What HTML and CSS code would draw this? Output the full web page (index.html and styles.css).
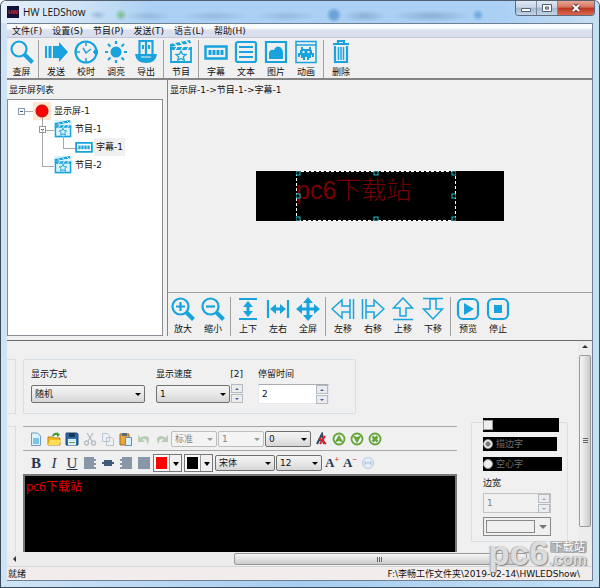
FILE: index.html
```html
<!DOCTYPE html>
<html lang="zh-CN">
<head>
    <meta charset="UTF-8">
    <meta name="viewport" content="width=device-width, initial-scale=1.0">
    <title>HW LEDShow</title>
    <link rel="stylesheet" href="styles.css">
</head>
<body>
    <svg class="sprite" aria-hidden="true">
        <symbol id="clap" viewBox="0 0 24 24">
            <path d="M2 9h20v13H2z" fill="none" stroke="currentColor" stroke-width="1.8"/>
            <path d="M1 4 21 0l1 3L1 7z" fill="currentColor"/>
            <path d="M1 7h22v3H1z" fill="currentColor"/>
            <path d="M5 3l3 3M11 2l3 3M17 1l3 3M6 10l2-3M12 10l2-3M18 10l2-3" stroke="#fff" stroke-width="1.3"/>
            <path d="M12 11l1.500 3.200 3.500.300-2.600 2.300.800 3.400-3.200-1.800-3.200 1.800.800-3.400L7 14.500l3.500-.300z" fill="none" stroke="currentColor" stroke-width="1.3"/>
        </symbol>
        <symbol id="caption" viewBox="0 0 24 24">
            <path d="M1.500 6.500h21v12h-21z" fill="none" stroke="currentColor" stroke-width="2.5"/>
            <path d="M4.500 10h3v5h-3zM8.500 10h3v5h-3zM12.500 10h3v5h-3zM16.500 10h3v5h-3z" fill="currentColor"/>
        </symbol>
    </svg>

    <div class="window">
        <header class="titlebar">
            <span class="app-icon">HW</span>
            <h1>HW LEDShow</h1>
            <div class="window-buttons">
                <button class="min" aria-label="最小化"><svg viewBox="0 0 12 10"><path d="M1.500 5.500h9v3h-9z" fill="#fff" stroke="#566276"/></svg></button>
                <button class="max" aria-label="最大化"><svg viewBox="0 0 12 10"><path d="M1.500 1.500h9v7h-9z" fill="#fff" stroke="#566276"/><path d="M4.500 4h3v2h-3z" fill="#a9bbce" stroke="#566276"/></svg></button>
                <button class="close" aria-label="关闭"><svg viewBox="0 0 12 10"><path d="M3 2l6 6M9 2L3 8" stroke="#5b3038" stroke-width="4"/><path d="M3 2l6 6M9 2L3 8" stroke="#fff" stroke-width="2.3"/></svg></button>
            </div>
        </header>

        <div class="client">
            <nav class="menu">
                <a href="#">文件(F)</a>
                <a href="#">设置(S)</a>
                <a href="#">节目(P)</a>
                <a href="#">发送(T)</a>
                <a href="#">语言(L)</a>
                <a href="#">帮助(H)</a>
            </nav>

            <div class="toolbar main-tools">
                <button><svg viewBox="0 0 24 24"><circle cx="9" cy="9" r="7.500" class="line"/><path d="M14.500 14.500l8 8" class="line thick"/></svg>查屏</button>
                <span class="sep"></span>
                <button><svg viewBox="0 0 24 24"><path d="M1 6h2v12H1zM4.500 6h3v12h-3zM9 6h6V2l9 10-9 10v-4H9z" class="fill"/></svg>发送</button>
                <button><svg viewBox="0 0 24 24"><circle cx="12" cy="12" r="10.500" class="line"/><path d="M9 8l3 5 5-4M12 2v4M12 18v4M2 12h4M19 12h5" class="line thin"/><path d="M20 10h4v4h-4z" class="fill"/></svg>校时</button>
                <button><svg viewBox="0 0 24 24"><circle cx="12" cy="12" r="5.500" class="fill"/><path d="M12 1v3M12 20v3M1 12h3M20 12h3M4 4l2.500 2.500M17.500 17.500L20 20M20 4l-2.500 2.500M6.500 17.500L4 20" class="line"/></svg>调亮</button>
                <button><svg viewBox="0 0 24 24"><path d="M5.500 1h13v14h-13zM12 1v14" class="line"/><path d="M8 5h2v4H8zM14 5h2v4h-2zM1 14h22q-1 9-11 9T1 14z" class="fill"/><path d="M7 17h10" stroke="#f0f0f0"/></svg>导出</button>
                <span class="sep"></span>
                <button><svg><use href="#clap"/></svg>节目</button>
                <span class="sep"></span>
                <button><svg><use href="#caption"/></svg>字幕</button>
                <button><svg viewBox="0 0 24 24"><rect x="2" y="2" width="20" height="20" rx="2" class="line"/><path d="M5 7h14M5 12h14M5 17h14" class="line"/></svg>文本</button>
                <button><svg viewBox="0 0 24 24"><path d="M2 2h20v20H2z" class="line"/><path d="M5 19v-6q1-4 5-3 2-5 6-3 3 2 3 6v6z" class="fill"/></svg>图片</button>
                <button><svg viewBox="0 0 24 24"><path d="M2 1.500h20v21H2zM2 5h20" class="line thin"/><path d="M7 7h2v2h6V7h2v3h1v3h2v4h-2v-2h-1v3h-2v2h-2v-3h-2v3H9v-2H7v-3H6v2H4v-4h2v-3h1z" class="fill"/><path d="M8.500 11h2v2h-2zM13.500 11h2v2h-2z" fill="#f0f0f0"/></svg>动画</button>
                <span class="sep"></span>
                <button><svg viewBox="0 0 24 24"><path d="M4 4h16M9 3V1h6v2M6 6v16h12V6" class="line"/><path d="M9.500 7v13M12 7v13M14.500 7v13" class="line thin"/></svg>删除</button>
            </div>

            <div class="workspace">
                <section class="screens">
                    <h2>显示屏列表</h2>
                    <ul class="tree">
                        <li>
                            <div class="node"><i class="toggle"></i><span class="dot"></span><span>显示屏-1</span></div>
                            <ul>
                                <li>
                                    <div class="node"><i class="toggle"></i><svg><use href="#clap"/></svg><span>节目-1</span></div>
                                    <ul>
                                        <li><div class="node"><svg class="plain"><use href="#caption"/></svg><span class="selected">字幕-1</span></div></li>
                                    </ul>
                                </li>
                                <li><div class="node"><svg><use href="#clap"/></svg><span>节目-2</span></div></li>
                            </ul>
                        </li>
                    </ul>
                </section>

                <section class="preview">
                    <p class="path">显示屏-1-&gt;节目-1-&gt;字幕-1</p>
                    <div class="stage">
                        <div class="led">
                            <div class="region">
                                pc6下载站
                                <svg class="handles" aria-hidden="true">
                                    <rect x="0" y="0" width="100%" height="100%" class="marquee"/>
                                    <svg x="0" y="0" class="grips"><rect x="0" y="0"/></svg>
                                    <svg x="50%" y="0" class="grips"><rect x="-2" y="0"/></svg>
                                    <svg x="100%" y="0" class="grips"><rect x="-4" y="0"/></svg>
                                    <svg x="0" y="50%" class="grips"><rect x="0" y="-2"/></svg>
                                    <svg x="100%" y="50%" class="grips"><rect x="-4" y="-2"/></svg>
                                    <svg x="0" y="100%" class="grips"><rect x="0" y="-4"/></svg>
                                    <svg x="50%" y="100%" class="grips"><rect x="-2" y="-4"/></svg>
                                    <svg x="100%" y="100%" class="grips"><rect x="-4" y="-4"/></svg>
                                </svg>
                            </div>
                        </div>
                    </div>
                    <div class="toolbar view-tools">
                        <button><svg viewBox="0 0 24 24"><circle cx="9.500" cy="9.500" r="8" class="line"/><path d="M5 9.500h9M9.500 5v9" class="line"/><path d="M15.500 15.500l7 7" class="line thick"/></svg>放大</button>
                        <button><svg viewBox="0 0 24 24"><circle cx="9.500" cy="9.500" r="8" class="line"/><path d="M5 9.500h9" class="line"/><path d="M15.500 15.500l7 7" class="line thick"/></svg>缩小</button>
                        <span class="sep"></span>
                        <button><svg viewBox="0 0 24 24"><path d="M3 2h18M3 22h18" class="line"/><path d="M12 4l5 6h-3.500v4H17l-5 6-5-6h3.500v-4H7z" class="fill"/></svg>上下</button>
                        <button><svg viewBox="0 0 24 24"><path d="M2 3v18M22 3v18" class="line"/><path d="M4 12l6-5v3.500h4V7l6 5-6 5v-3.500h-4V17z" class="fill"/></svg>左右</button>
                        <button><svg viewBox="0 0 24 24"><path d="M12 0l5 6h-3.500v4.500H18V7l6 5-6 5v-3.500h-4.500V18H17l-5 6-5-6h3.500v-4.500H6V17l-6-5 6-5v3.500h4.500V6H7z" class="fill"/></svg>全屏</button>
                        <span class="sep"></span>
                        <button><svg viewBox="0 0 24 24"><path d="M1 12L11 3v6h8v6h-8v6zM19 2v20M22.500 2v20" class="line thin"/></svg>左移</button>
                        <button><svg viewBox="0 0 24 24"><path d="M23 12L13 3v6H5v6h8v6zM5 2v20M1.500 2v20" class="line thin"/></svg>右移</button>
                        <button><svg viewBox="0 0 24 24"><path d="M12 1l9.500 10H15v8H9v-8H2.500zM2 22.500h20" class="line thin"/></svg>上移</button>
                        <button><svg viewBox="0 0 24 24"><path d="M12 22l9.500-10H15V2H9v10H2.500zM2 1.500h20" class="line thin"/></svg>下移</button>
                        <span class="sep"></span>
                        <button><svg viewBox="0 0 24 24"><rect x="2" y="2" width="20" height="20" rx="5" class="line"/><path d="M8 6l10 6-10 6z" class="fill"/></svg>预览</button>
                        <button><svg viewBox="0 0 24 24"><rect x="2" y="2" width="20" height="20" rx="5" class="line"/><path d="M8 8h8v8H8z" class="fill"/></svg>停止</button>
                    </div>
                </section>
            </div>

            <div class="properties">
                <div class="props-body">
                    <div class="edge"><div></div><div></div></div>

                    <div class="props-main">
                        <div class="group effects">
                            <div class="field mode">
                                <label for="mode">显示方式</label>
                                <span class="drop"><select id="mode"><option>随机</option></select></span>
                            </div>
                            <div class="field speed">
                                <div class="label-row"><label for="speed">显示速度</label><span>[2]</span></div>
                                <div class="with-spin">
                                    <span class="drop"><select id="speed"><option>1</option></select></span>
                                    <span class="spin"><button aria-label="增加"></button><button aria-label="减少"></button></span>
                                </div>
                            </div>
                            <div class="field stay">
                                <label for="stay">停留时间</label>
                                <div class="number"><input type="text" id="stay" value="2"><span class="spin"><button aria-label="增加"></button><button aria-label="减少"></button></span></div>
                            </div>
                        </div>

                        <div class="editor">
                            <div class="edit-tools">
                                <button aria-label="新建"><svg viewBox="0 0 14 14"><path d="M2.500 1h6l3 3v9.500h-9z" fill="#dff3fc" stroke="#6e9dbd"/><path d="M4 6h6v6H4z" fill="#7cc5e6"/></svg></button>
                                <button aria-label="打开"><svg viewBox="0 0 14 14"><path d="M1 5h5l1 1h6v7H1z" fill="#f3bd1d" stroke="#b98a16"/><path d="M1 13l2-5h11l-2 5z" fill="#ffdd55"/><path d="M6 4q1-3 5-2" fill="none" stroke="#3e9a35" stroke-width="2"/><path d="M10 0l3 3-3 2z" fill="#3e9a35"/></svg></button>
                                <button aria-label="保存"><svg viewBox="0 0 14 14"><path d="M1 1h11l1 1v11H1z" fill="#2d6aa8" stroke="#1e4777"/><path d="M4 1h6v4H4z" fill="#17345c"/><path d="M3 7h8v6H3z" fill="#d9ebf5"/><path d="M4 10h6v1H4z" fill="#63b04c"/></svg></button>
                                <button disabled aria-label="剪切"><svg viewBox="0 0 14 14"><g fill="none" stroke="#b5bdc4" stroke-width="1.3"><path d="M4 1l5 8M10 1L5 9"/><circle cx="3.500" cy="11" r="2"/><circle cx="10.500" cy="11" r="2"/></g></svg></button>
                                <button disabled aria-label="复制"><svg viewBox="0 0 14 14"><path d="M1.500 1.500h5l2 2v6h-7zM5.500 5.500h5l2 2v6h-7z" fill="#edf0f4" stroke="#bcc4cf"/></svg></button>
                                <button aria-label="粘贴"><svg viewBox="0 0 14 14"><path d="M1 2h9v11H1z" fill="#e8a63c" stroke="#9b6c2c"/><path d="M3 1h5v3H3z" fill="#5d6974"/><path d="M6.500 5.500h6v8h-6z" fill="#d9f0fb" stroke="#5c8fb5"/></svg></button>
                                <button disabled aria-label="撤销"><svg viewBox="0 0 14 14"><path d="M1 3v7h7L5.500 7.500q4-2 5 5 4-8-2.500-8.500-2 0-4.500 1.500z" fill="#b7cdb4"/></svg></button>
                                <button disabled aria-label="重做"><svg viewBox="0 0 14 14"><path d="M13 3v7H6l2.500-2.500q-4-2-5 5Q-.5 4.500 6 4q2 0 4.500 1.500z" fill="#b7cdb4"/></svg></button>
                                <span class="drop small off"><select aria-label="字间距" disabled><option>标准</option></select></span>
                                <span class="drop small off"><select aria-label="行间距" disabled><option>1</option></select></span>
                                <span class="drop small"><select aria-label="偏移"><option>0</option></select></span>
                                <button aria-label="清除格式"><svg viewBox="0 0 14 14"><path d="M3 12L8 2l2 10M5 8h5" fill="none" stroke="#2f4765" stroke-width="2"/><path d="M5 6l7 6M11 4l-5 8" stroke="#e0202e" stroke-width="2"/></svg></button>
                                <button aria-label="上移"><svg viewBox="0 0 14 14" class="round"><circle cx="7" cy="7" r="5.500"/><path d="M4.500 9L7 4.500 9.500 9 7 8z"/></svg></button>
                                <button aria-label="下移"><svg viewBox="0 0 14 14" class="round"><circle cx="7" cy="7" r="5.500"/><path d="M4.500 5L7 9.500 9.500 5 7 6z"/></svg></button>
                                <button aria-label="取消"><svg viewBox="0 0 14 14" class="round"><circle cx="7" cy="7" r="5.500"/><path d="M4.500 4.500l5 5M9.500 4.500l-5 5" stroke-width="2.5"/></svg></button>
                            </div>
                            <div class="edit-tools">
                                <button class="letter"><b>B</b></button>
                                <button class="letter"><i>I</i></button>
                                <button class="letter"><u>U</u></button>
                                <button aria-label="左对齐"><svg viewBox="0 0 14 14"><path d="M1 2h10M1 4h12M1 6h10M1 8h12M1 10h10M1 12h12" class="bars"/></svg></button>
                                <button aria-label="居中"><svg viewBox="0 0 14 14"><path d="M1 7h12M3 5h8M3 9h8" stroke="#405a79" stroke-width="2"/></svg></button>
                                <button aria-label="右对齐"><svg viewBox="0 0 14 14"><path d="M3 2h10M1 4h12M3 6h10M1 8h12M3 10h10M1 12h12" class="bars"/></svg></button>
                                <button aria-label="两端对齐"><svg viewBox="0 0 14 14"><path d="M1 2h12M1 4h12M1 6h12M1 8h12M1 10h12M1 12h12" class="bars"/></svg></button>
                                <button class="color red" aria-label="文字颜色"><span></span></button>
                                <button class="color black" aria-label="背景颜色"><span></span></button>
                                <span class="drop small font"><select aria-label="字体"><option>宋体</option></select></span>
                                <span class="drop small"><select aria-label="字号"><option>12</option></select></span>
                                <button class="letter size">A<sup>+</sup></button>
                                <button class="letter size">A<sup>−</sup></button>
                                <button aria-label="链接"><svg viewBox="0 0 14 14"><circle cx="7" cy="7" r="5.500" fill="#e3edf7" stroke="#b6c9df"/><path d="M4 5v4M10 5v4M4 7h6" fill="none" stroke="#a9bfd9"/></svg></button>
                            </div>
                            <textarea aria-label="字幕内容">pc6下载站</textarea>
                        </div>
                    </div>

                    <div class="group outline">
                        <label class="choice wide"><input type="checkbox" aria-label="启用描边"></label>
                        <label class="choice"><input type="radio" name="style" checked disabled>描边字</label>
                        <label class="choice wider"><input type="radio" name="style" disabled>空心字</label>
                        <label for="border">边宽</label>
                        <div class="number off"><input type="text" id="border" value="1" disabled><span class="spin"><button disabled aria-label="增加"></button><button disabled aria-label="减少"></button></span></div>
                        <button class="picker" disabled aria-label="边框颜色"><span></span></button>
                    </div>
                </div>
                <div class="scroll-y"><i class="arrow up"></i><div class="thumb"><i></i></div></div>
                <div class="scroll-x"><i class="arrow left"></i><div class="thumb"><i></i></div></div>
            </div>

            <footer class="status">
                <span>就绪</span>
                <span>F:\李畅工作文件夹\2019-02-14\HWLEDShow\</span>
            </footer>
        </div>

        <div class="watermark">
            <strong>pc6</strong>
            <div><span>下载站</span><em>.com</em></div>
        </div>
    </div>
</body>
</html>
```
FILE: styles.css
```css
* {
    box-sizing: border-box;
}
body {
    margin: 0;
    font: 9px/12px "DejaVu Sans", "Noto Sans CJK SC", sans-serif;
    color: #111;
}
button, input, select, textarea {
    font: inherit;
    color: inherit;
    margin: 0;
    padding: 0;
    border: 0;
    border-radius: 0;
    background: none;
    appearance: none;
}
h1, h2, p, ul {
    margin: 0;
    padding: 0;
    font-weight: normal;
}
.sprite {
    display: none;
}

/* window frame */
.window {
    position: relative;
    display: flex;
    flex-direction: column;
    height: 100vh;
    min-height: 500px;
    padding: 0 6px 6px;
    border: 1px solid #39495a;
    border-top-color: #52606e;
    border-radius: 6px 6px 0 0;
    background: linear-gradient(90deg, #cfe3f6, #a8cdf0 50%, #c3e0f5);
    overflow: hidden;
}
.titlebar {
    display: flex;
    align-items: center;
    flex: none;
    height: 22px;
    margin: 0 -6px;
    padding-left: 6px;
    background:
        radial-gradient(circle at 120px 14px, #7fbf9a 1px, transparent 6px),
        radial-gradient(ellipse 9px 5px at 97px 14px, #9dbcd9, transparent),
        radial-gradient(ellipse 24px 5px at 148px 15px, #96b9db, transparent),
        radial-gradient(ellipse 34px 5px at 213px 15px, #96b9db, transparent),
        radial-gradient(ellipse 32px 5px at 285px 15px, #96b9db, transparent),
        radial-gradient(ellipse 8px 8px at 333px 14px, #6ba3da 40%, transparent),
        radial-gradient(ellipse 22px 6px at 364px 15px, #8aafd3, transparent),
        radial-gradient(ellipse 40px 6px at 430px 15px, #8aafd3, transparent),
        radial-gradient(circle at 477px 14px, #6ca8e2 1px, transparent 6px),
        linear-gradient(90deg, #e6f0fa, #cfe3f6 80px, #abd0f4 150px, #abd0f4 500px, #c6def2);
}
.app-icon {
    width: 12px;
    height: 12px;
    margin-right: 4px;
    background: #15103a;
    color: #e32323;
    font: bold 6px/12px "Liberation Sans", sans-serif;
    text-align: center;
}
h1 {
    font: 10px/14px "Open Sans", sans-serif;
}
.window-buttons {
    display: flex;
    align-self: flex-start;
    height: 15px;
    margin-left: auto;
    margin-right: 4px;
    border: 1px solid #5d6c7d;
    border-top: 0;
    border-radius: 0 0 4px 4px;
    overflow: hidden;
}
.window-buttons button {
    display: grid;
    place-items: center;
    width: 21px;
    border-right: 1px solid #7b8a9c;
    background: linear-gradient(#dfe9f4, #c7d6e6 45%, #a3b7cd 50%, #c2d6ea);
}
.window-buttons .close {
    width: 36px;
    border-right: 0;
    background: linear-gradient(#e9a595, #d5715b 45%, #b93620 50%, #d9694f);
}
.window-buttons svg {
    width: 12px;
    height: 10px;
}
.client {
    display: flex;
    flex-direction: column;
    flex: 1;
    min-height: 0;
    border: 1px solid #6f8090;
    border-left: 0;
    background: #f0f0f0;
}
.menu {
    display: flex;
    flex: none;
    gap: 10px;
    height: 14px;
    padding-left: 5px;
    border-bottom: 1px solid #c3c8d8;
    background: linear-gradient(#fafbfd 30%, #dbe0ef 50%, #d9deee);
    line-height: 14px;
}
.menu a {
    color: #111;
    text-decoration: none;
}

/* icon toolbars */
.toolbar {
    display: flex;
    flex: none;
}
.toolbar button {
    display: flex;
    flex-direction: column;
    align-items: center;
    gap: 2px;
    width: 30px;
}
.toolbar svg {
    width: 24px;
    height: 24px;
    color: #19a3dd;
}
.toolbar .sep {
    width: 1px;
    margin: 0 2px;
    background: #a0a0a0;
}
.main-tools {
    height: 42px;
    padding-top: 2px;
    border-bottom: 2px solid #858585;
}
.main-tools button:first-child {
    width: 29px;
}
.line {
    fill: none;
    stroke: currentColor;
    stroke-width: 2.2;
}
.line.thin {
    stroke-width: 1.5;
}
.line.thick {
    stroke-width: 4;
}
.fill {
    fill: currentColor;
}

/* screen list and preview */
.workspace {
    display: flex;
    flex: 1;
    min-height: 0;
    gap: 4px;
    padding-bottom: 4px;
}
.screens {
    display: flex;
    flex-direction: column;
    width: 156px;
}
.screens h2 {
    padding: 4px 2px 2px;
    font-size: 9px;
    line-height: 13px;
}
.tree {
    flex: 1;
    padding: 2px 0 0 9px;
    border: 1px solid #8a8e94;
    background: #fff;
}
.tree ul {
    padding-left: 21px;
}
.tree li {
    position: relative;
    list-style: none;
}
.tree ul li::before {
    content: "";
    position: absolute;
    left: 4px;
    top: -2px;
    width: 14px;
    height: 12px;
    border: solid #a8a8a8;
    border-width: 0 0 1px 1px;
}
.tree ul li + li::before {
    top: -27px;
    height: 37px;
}
.node {
    position: relative;
    display: flex;
    align-items: center;
    gap: 3px;
    height: 18px;
    padding-left: 16px;
}
.node svg {
    width: 18px;
    height: 18px;
    color: #19a3dd;
    background: #d9f2fb;
}
.node .plain {
    background: none;
}
.toggle {
    position: absolute;
    left: 1px;
    top: 6px;
    width: 7px;
    height: 7px;
    border: 1px solid #8d98a8;
    background: linear-gradient(#3f5a8c, #3f5a8c) center / 3px 1px no-repeat #fff;
}
.tree > li > .node::before {
    content: "";
    position: absolute;
    left: 8px;
    top: 9px;
    width: 8px;
    border-top: 1px solid #a8a8a8;
}
.dot {
    width: 18px;
    height: 18px;
    background: radial-gradient(circle, #f00 4px, #d31313 6px, #fbe6d0 7px);
}
.selected {
    padding: 3px 2px;
    margin-left: -2px;
    background: #f0f0f0;
}
.preview {
    display: flex;
    flex-direction: column;
    flex: 1;
    border-left: 1px solid #858585;
}
.path {
    padding: 4px 2px;
}
.stage {
    flex: 1;
    display: flex;
    align-items: center;
    padding-left: 88px;
}
.led {
    width: 248px;
    padding-left: 40px;
    background: #000;
}
.region {
    position: relative;
    width: 160px;
    height: 50px;
    color: #790000;
    font: 300 25px/38px "Liberation Sans", "Noto Sans CJK SC", sans-serif;
    white-space: nowrap;
}
.handles {
    position: absolute;
    inset: 0;
    width: 100%;
    height: 100%;
}
.marquee {
    fill: none;
    stroke: #fff;
    stroke-width: 2;
    stroke-dasharray: 3 2;
}
.grips {
    overflow: visible;
}
.grips rect {
    width: 4px;
    height: 4px;
    fill: #000;
    stroke: #1fc4cc;
}
.view-tools {
    height: 44px;
    padding-top: 4px;
    border-top: 1px solid #a0a0a0;
}

/* property panel */
.properties {
    display: grid;
    grid-template: 1fr 14px / 1fr 14px;
    flex: none;
    height: 226px;
    border-top: 1px solid #6c6c6c;
}
.props-body {
    display: flex;
    align-items: stretch;
    min-height: 0;
    padding-top: 18px;
    overflow: hidden;
}
.edge {
    display: flex;
    flex-direction: column;
    gap: 12px;
    width: 9px;
    margin-right: 7px;
}
.edge div {
    flex: 1;
    border: 1px solid #d5dfe5;
    border-width: 1px 1px 0 0;
}
.edge div:first-child {
    flex: none;
    height: 55px;
    border-bottom-width: 1px;
}
.props-main {
    display: flex;
    flex-direction: column;
    flex: none;
    gap: 12px;
    width: 434px;
}
.group {
    border: 1px solid #d5dfe5;
    border-radius: 2px;
}
.effects {
    display: flex;
    width: 333px;
    height: 55px;
    padding: 8px 7px 0;
}
.field {
    display: flex;
    flex-direction: column;
    gap: 4px;
}
.mode {
    width: 114px;
    margin-right: 11px;
}
.speed {
    width: 87px;
    margin-right: 15px;
}
.stay {
    width: 71px;
}
.label-row, .with-spin, .number {
    display: flex;
    justify-content: space-between;
}
.drop {
    position: relative;
    display: block;
}
.drop select {
    display: block;
    width: 100%;
    height: 18px;
    padding-left: 3px;
    border: 1px solid #707070;
    border-radius: 2px;
    background: linear-gradient(#f4f4f4, #e8e8e8 50%, #d6d6d6);
}
.drop::after {
    content: "";
    position: absolute;
    right: 4px;
    top: 8px;
    border: 3px solid transparent;
    border-top-color: #000;
    border-bottom: 0;
    pointer-events: none;
}
.mode .drop, .speed .drop {
    margin-top: 1px;
}
.with-spin .drop {
    width: 74px;
}
.spin {
    display: flex;
    flex-direction: column;
    gap: 1px;
    width: 12px;
    height: 19px;
}
.spin button {
    display: grid;
    place-items: center;
    flex: 1;
    border: 1px solid #b4bac2;
    background: #ececec;
}
.spin button::after {
    content: "";
    border: 2px solid transparent;
    border-bottom-color: #4a5fa0;
    border-top: 0;
}
.spin button + button::after {
    border: 2px solid transparent;
    border-top-color: #4a5fa0;
    border-bottom: 0;
}
.number {
    height: 20px;
    border: 1px solid #e3e9ef;
    border-top-color: #abadb3;
    background: #fff;
}
.number input {
    width: 50px;
    flex: 1;
    padding-left: 3px;
}

/* subtitle editor */
.editor {
    display: flex;
    flex-direction: column;
    flex: 1;
    min-height: 0;
}
.edit-tools {
    display: flex;
    align-items: center;
    flex: none;
    height: 24px;
    padding-left: 4px;
    border-top: 1px solid #a6a6a6;
}
.edit-tools button {
    display: grid;
    place-items: center;
    width: 18px;
    height: 18px;
}
.edit-tools svg {
    width: 14px;
    height: 14px;
}
.small {
    width: 46px;
    margin-right: 1px;
}
.small select {
    height: 16px;
}
.small::after {
    top: 7px;
}
.font {
    width: 60px;
}
.off select, .off input {
    color: #838383;
}
.off select {
    border-color: #bcbcbc;
    background: #f4f4f4;
    opacity: 1;
}
.drop.off::after {
    border-top-color: #999;
}
.round {
    fill: none;
    stroke: #63a537;
    stroke-width: 1.8;
}
.bars {
    stroke: #66788e;
    stroke-width: 1.4;
}
.edit-tools .letter {
    display: block;
    color: #24384f;
    font: 15px/18px "Liberation Serif", serif;
    white-space: nowrap;
}
.edit-tools .size {
    font-weight: bold;
    font-size: 13px;
}
.letter sup {
    color: #d22;
    font-size: 8px;
    line-height: 1px;
}
.edit-tools .color {
    position: relative;
    display: flex;
    align-items: center;
    width: 29px;
    margin-right: 2px;
    padding-left: 2px;
    border: 1px solid #777;
    background: #fff;
}
.color span {
    width: 12px;
    height: 12px;
    background: #f00;
}
.black span {
    background: #000;
}
.color::after {
    content: "";
    width: 11px;
    height: 16px;
    margin-left: 2px;
    border-left: 1px solid #999;
    background: #f0f0f0;
}
.color::before {
    content: "";
    position: absolute;
    right: 2px;
    top: 7px;
    border: 3px solid transparent;
    border-top: 4px solid #000;
    border-bottom: 0;
}
textarea {
    display: block;
    flex: 1;
    min-height: 0;
    width: 100%;
    padding: 3px 1px;
    border: 2px solid #777;
    border-bottom: 0;
    background: #000;
    color: #e00000;
    font: 12px/16px "Open Sans", "Noto Sans CJK SC", sans-serif;
    resize: none;
}

/* outline options */
.outline {
    display: flex;
    flex-direction: column;
    align-items: flex-start;
    width: 97px;
    height: 120px;
    margin: 63px 0 0 14px;
    padding: 0 11px;
}
.choice {
    display: flex;
    align-items: center;
    gap: 3px;
    width: 74px;
    height: 14px;
    margin-bottom: 6px;
    background: #000;
    color: #707070;
}
.choice.wide {
    width: 76px;
    margin-top: -5px;
    margin-bottom: 5px;
}
.choice.wider {
    width: 79px;
}
.choice input {
    width: 10px;
    height: 10px;
    border: 1px solid #999;
    background: #eee;
}
.choice input[type="radio"] {
    border-radius: 50%;
}
.choice input[type="radio"]:checked {
    background: radial-gradient(#777 2px, #eee 3px);
}
.outline .number {
    width: 68px;
    margin: 4px 0;
    border-color: #c2c2c2;
    background: #f0f0f0;
}
.off .spin button::after {
    opacity: 0.5;
}
.picker {
    position: relative;
    flex: none;
    width: 68px;
    height: 19px;
    padding: 2px 15px 2px 2px;
    border: 1px solid #888;
}
.picker span {
    display: block;
    height: 100%;
    border: 1px solid #888;
}
.picker::after {
    content: "";
    position: absolute;
    right: 3px;
    top: 7px;
    border: 4px solid transparent;
    border-top-color: #777;
    border-bottom: 0;
}

/* scroll bars */
.scroll-y, .scroll-x {
    display: flex;
    align-items: center;
    background: #ececec;
}
.scroll-y {
    flex-direction: column;
}
.scroll-x {
    grid-column: 1 / 3;
}
.arrow {
    border: 3px solid transparent;
}
.arrow.up {
    margin: 4px 0 7px;
    border-bottom-color: #333;
    border-top: 0;
}
.arrow.left {
    margin-left: 6px;
    border-right-color: #333;
    border-left: 0;
}
.thumb {
    display: grid;
    place-items: center;
    border: 1px solid #9a9a9a;
    border-radius: 2px;
}
.scroll-y .thumb {
    width: 12px;
    height: 172px;
    background: linear-gradient(90deg, #f5f5f5, #e2e2e2 50%, #c9c9c9);
}
.scroll-x .thumb {
    width: 50%;
    height: 12px;
    margin-left: 218px;
    background: linear-gradient(#f5f5f5, #e2e2e2 50%, #c9c9c9);
}
.scroll-y .thumb i {
    width: 5px;
    height: 6px;
    background: repeating-linear-gradient(#666 0 1px, transparent 1px 2px);
}
.scroll-x .thumb i {
    width: 6px;
    height: 5px;
    background: repeating-linear-gradient(90deg, #666 0 1px, transparent 1px 2px);
}
.status {
    display: flex;
    justify-content: space-between;
    flex: none;
    height: 14px;
    padding: 0 12px 0 1px;
    border-top: 1px solid #d7d7d7;
    background: #f1edec;
    line-height: 14px;
}

/* site mark over the corner */
.watermark {
    position: absolute;
    right: 12px;
    bottom: 20px;
    display: flex;
    align-items: flex-end;
    gap: 1px;
    color: #dcdcdc;
    text-shadow: 1px 1px 1px #888, -1px 0 1px #aaa;
    font-family: "Liberation Sans", "Noto Sans CJK SC", sans-serif;
    pointer-events: none;
}
.watermark strong {
    font-size: 35px;
    line-height: 28px;
}
.watermark div {
    display: flex;
    flex-direction: column;
    align-items: center;
}
.watermark span {
    padding: 0 2px;
    border-radius: 2px;
    background: #b5b5b5;
    color: #fff;
    font-size: 11px;
    line-height: 12px;
}
.watermark em {
    font: bold 16px/14px "Liberation Sans", sans-serif;
}
```
